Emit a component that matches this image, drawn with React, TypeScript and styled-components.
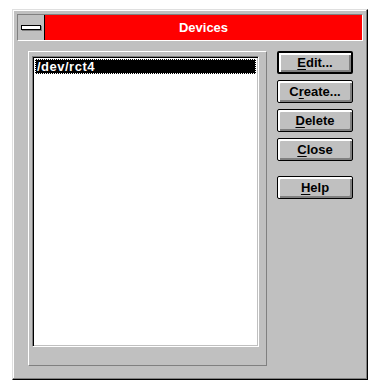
import React from 'react';
import styled, { createGlobalStyle } from 'styled-components';

const GlobalStyle = createGlobalStyle`
  html, body {
    margin: 0;
    padding: 0;
    background: #ffffff;
  }
  body {
    font-family: 'Liberation Sans', Arial, sans-serif;
  }
`;

const Page = styled('div')`
  padding: 9px 0 0 12px;
`;

const Window = styled('div')`
  box-sizing: border-box;
  width: 356px;
  height: 371px;
  background: #c0c0c0;
  border-style: solid;
  border-width: 1px;
  border-color: #dfdfdf #000 #000 #dfdfdf;
  box-shadow: inset -1px -1px 0 #808080, inset 1px 1px 0 #ffffff;
  padding: 4px 4px 0 4px;
  display: flex;
  flex-direction: column;
`;

const TitleBar = styled('div')`
  box-sizing: border-box;
  height: 27px;
  display: flex;
  border-style: solid;
  border-width: 1px;
  border-color: #808080 #ffffff #ffffff #808080;
`;

const SysMenu = styled('div')`
  width: 26px;
  background: #c0c0c0;
  border-right: 1px solid #000;
  display: flex;
  align-items: center;
  justify-content: center;
`;

const SysDash = styled('div')`
  box-sizing: border-box;
  width: 20px;
  height: 5px;
  background: #fff;
  border: 1px solid #000;
  box-shadow: 1px 1px 0 #808080;
`;

const Caption = styled('div')`
  flex: 1;
  background: #ff0000;
  color: #fff;
  font-weight: bold;
  font-size: 13px;
  display: flex;
  align-items: center;
  justify-content: center;
  padding-bottom: 1px;
`;

const Body = styled('div')`
  display: flex;
  align-items: flex-start;
  padding: 10px 0 0 11px;
  gap: 10px;
`;

const Group = styled('div')`
  box-sizing: border-box;
  width: 239px;
  height: 315px;
  border-style: solid;
  border-width: 1px;
  border-color: #ffffff #808080 #808080 #ffffff;
  padding: 4px 7px 18px 3px;
  display: flex;
`;

const List = styled('div')`
  flex: 1;
  background: #fff;
  border-style: solid;
  border-width: 1px;
  border-color: #808080 #ffffff #ffffff #808080;
  box-shadow: inset 1px 1px 0 #000, inset -1px -1px 0 #c0c0c0;
  padding: 2px;
`;

const ListItem = styled('div')<{ $selected?: boolean }>`
  box-sizing: border-box;
  height: 15px;
  line-height: 13px;
  font-size: 13px;
  letter-spacing: 0.5px;
  font-weight: bold;
  padding: 0 1px;
  color: ${(p) => (p.$selected ? '#fff' : '#000')};
  background: ${(p) => (p.$selected ? '#000' : 'transparent')};
  border: 1px dotted ${(p) => (p.$selected ? '#fff' : 'transparent')};
`;

const Buttons = styled('div')`
  display: flex;
  flex-direction: column;
  gap: 6px;
`;

const Button = styled('button')<{ $default?: boolean; $spaced?: boolean }>`
  box-sizing: border-box;
  width: 76px;
  height: 23px;
  padding: 0;
  margin-top: ${(p) => (p.$spaced ? '9px' : '0')};
  background: #c0c0c0;
  color: #000;
  font-family: 'Liberation Sans', Arial, sans-serif;
  font-weight: bold;
  font-size: 13px;
  border: ${(p) => (p.$default ? '2px' : '1px')} solid #000;
  border-radius: 2px;
  box-shadow: inset 1px 1px 0 #fff, inset 2px 2px 0 #fff,
    inset -1px -1px 0 #808080, inset -2px -2px 0 #808080;
  cursor: pointer;
  u {
    text-decoration-thickness: 1px;
    text-underline-offset: 2px;
  }
  :focus {
    outline: 0;
  }
`;

const buttons = [
  { key: 'E', rest: 'dit...', def: true },
  { pre: 'C', key: 'r', rest: 'eate...' },
  { key: 'D', rest: 'elete' },
  { key: 'C', rest: 'lose' },
  { key: 'H', rest: 'elp', spaced: true },
];

export default function App() {
  return (
    <Page>
      <GlobalStyle />
      <Window>
        <TitleBar>
          <SysMenu>
            <SysDash />
          </SysMenu>
          <Caption>Devices</Caption>
        </TitleBar>
        <Body>
          <Group>
            <List>
              <ListItem $selected>/dev/rct4</ListItem>
            </List>
          </Group>
          <Buttons>
            {buttons.map((b, i) => (
              <Button key={i} $default={b.def} $spaced={b.spaced}>
                {b.pre}
                <u>{b.key}</u>
                {b.rest}
              </Button>
            ))}
          </Buttons>
        </Body>
      </Window>
    </Page>
  );
}
